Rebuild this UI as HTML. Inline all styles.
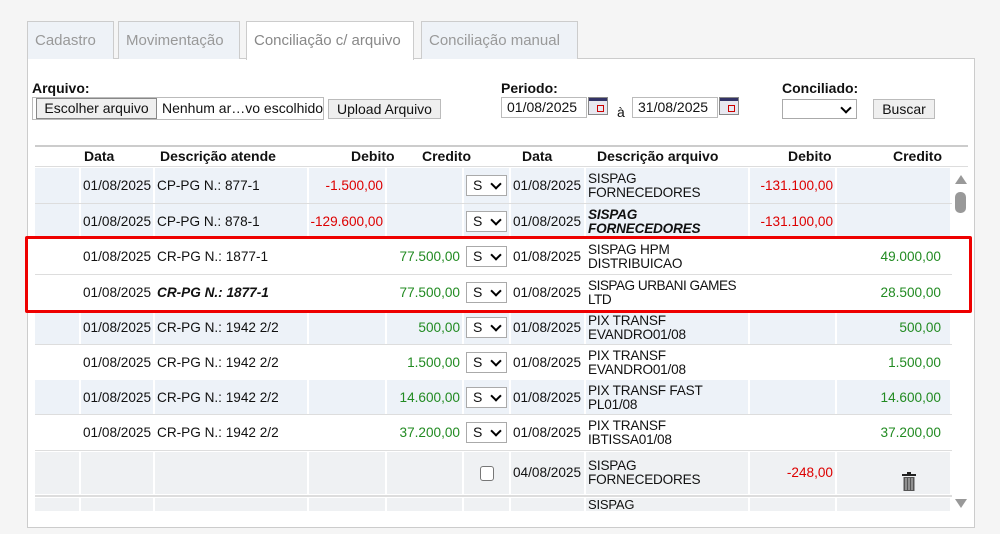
<!DOCTYPE html><html><head><meta charset="utf-8"><style>
*{box-sizing:border-box}body{margin:0;width:1000px;height:534px;background:#f5f5f5;font-family:"Liberation Sans",Arial,sans-serif;font-size:14px;color:#111;position:relative;overflow:hidden}
.a{position:absolute}
.tab{position:absolute;top:21px;height:38px;background:#eef2f7;border:1px solid #ccc;border-bottom:none;color:#999;font-size:15px;line-height:38px;padding-left:7px}
.panel{position:absolute;left:27px;top:58px;width:948px;height:470px;background:#fff;border:1px solid #ccc}
.btn{position:absolute;background:#efefef;border:1px solid #bbb;font-size:14px;text-align:center}
.inp{position:absolute;border:1px solid #bbb;background:#fff;font-size:14px;padding-left:5px;line-height:19px}
.row{position:absolute;left:35px;height:35px;display:flex;font-size:13.6px}
.row div{height:100%;margin-right:2px;display:flex;align-items:center;padding:0 2px;line-height:14px}
.b div{background:#edf2f8}.w div{background:#fff}.g div{background:#eff1f3}
.r{justify-content:flex-end;color:#d00}.gr{justify-content:flex-end;color:#228b22}
.c0{width:44px}.c1{width:72px}.c2{width:152px}.c3{width:76px}.c4{width:75px}.c5{width:45px}.c6{width:73px}.c7{width:162px;letter-spacing:-0.2px}.c8{width:85px}.c9{width:113px;padding-right:9px!important}
.sel{width:42px;height:21px;border:1px solid #aaa;background:#fff;font-size:14px;padding-left:6px;line-height:19px;position:relative}
.sel:after{content:"";position:absolute;right:6px;top:4px;width:6px;height:6px;border-right:2px solid #000;border-bottom:2px solid #000;transform:rotate(45deg)}
.hd{position:absolute;top:148px;font-weight:bold;font-size:14px}
.line{position:absolute;left:35px;width:933px;height:1px;background:#ddd}
.cal{position:absolute;width:20px;height:18px;border:1px solid #888;background:#e8e8f0}
.cal:before{content:"";position:absolute;left:0;top:0;right:0;height:3px;background:#336}
.cal:after{content:"";position:absolute;right:3px;top:7px;width:5px;height:5px;border:1px solid #c00}
</style></head><body>
<div class="panel"></div>
<div class="tab" style="left:27px;width:87px">Cadastro</div>
<div class="tab" style="left:118px;width:122px">Movimentação</div>
<div class="tab" style="left:246px;width:168px;background:#fff;height:39px;color:#888">Conciliação c/ arquivo</div>
<div class="tab" style="left:421px;width:157px">Conciliação manual</div>
<div class="a" style="left:32px;top:80px;font-weight:bold">Arquivo:</div>
<div class="inp" style="left:32px;top:97px;width:292px;height:23px"></div>
<div class="btn" style="left:36px;top:98px;width:121px;height:21px;line-height:19px;background:#efefef;border-color:#888">Escolher arquivo</div>
<div class="a" style="left:162px;top:100px">Nenhum ar…vo escolhido</div>
<div class="btn" style="left:328px;top:99px;width:113px;height:20px;line-height:18px">Upload Arquivo</div>
<div class="a" style="left:501px;top:80px;font-weight:bold">Periodo:</div>
<div class="inp" style="left:501px;top:97px;width:86px;height:21px">01/08/2025</div>
<div class="cal" style="left:588px;top:97px"></div>
<div class="a" style="left:617px;top:104px">à</div>
<div class="inp" style="left:632px;top:97px;width:86px;height:21px">31/08/2025</div>
<div class="cal" style="left:719px;top:97px"></div>
<div class="a" style="left:782px;top:80px;font-weight:bold">Conciliado:</div>
<div class="inp sel" style="left:782px;top:99px;width:75px;height:20px"></div>
<div class="btn" style="left:873px;top:99px;width:62px;height:20px;line-height:18px">Buscar</div>
<div class="line" style="top:145px;height:2px;background:#ccc"></div>
<div class="hd" style="left:84px">Data</div><div class="hd" style="left:160px">Descrição atende</div>
<div class="hd" style="left:351px">Debito</div><div class="hd" style="left:422px">Credito</div>
<div class="hd" style="left:522px">Data</div><div class="hd" style="left:597px">Descrição arquivo</div>
<div class="hd" style="left:788px">Debito</div><div class="hd" style="left:893px">Credito</div>
<div class="line" style="top:166px"></div>

<div class="row b" style="top:168px"><div class="c0"></div><div class="c1">01/08/2025</div><div class="c2">CP-PG N.: 877-1</div><div class="c3 r">-1.500,00</div><div class="c4"></div><div class="c5"><span class="sel">S</span></div><div class="c6">01/08/2025</div><div class="c7">SISPAG<br>FORNECEDORES</div><div class="c8 r">-131.100,00</div><div class="c9"></div></div>
<div class="line" style="top:203px"></div>
<div class="row b" style="top:204px"><div class="c0"></div><div class="c1">01/08/2025</div><div class="c2">CP-PG N.: 878-1</div><div class="c3 r">-129.600,00</div><div class="c4"></div><div class="c5"><span class="sel">S</span></div><div class="c6">01/08/2025</div><div class="c7" style="font-weight:bold;font-style:italic">SISPAG<br>FORNECEDORES</div><div class="c8 r">-131.100,00</div><div class="c9"></div></div>
<div class="row w" style="top:239px"><div class="c0"></div><div class="c1">01/08/2025</div><div class="c2">CR-PG N.: 1877-1</div><div class="c3"></div><div class="c4 gr">77.500,00</div><div class="c5"><span class="sel">S</span></div><div class="c6">01/08/2025</div><div class="c7">SISPAG HPM<br>DISTRIBUICAO</div><div class="c8"></div><div class="c9 gr">49.000,00</div></div>
<div class="line" style="top:274px"></div>
<div class="row w" style="top:275px"><div class="c0"></div><div class="c1">01/08/2025</div><div class="c2" style="font-weight:bold;font-style:italic">CR-PG N.: 1877-1</div><div class="c3"></div><div class="c4 gr">77.500,00</div><div class="c5"><span class="sel">S</span></div><div class="c6">01/08/2025</div><div class="c7" style="letter-spacing:-0.5px">SISPAG URBANI GAMES<br>LTD</div><div class="c8"></div><div class="c9 gr">28.500,00</div></div>
<div class="row b" style="top:310px"><div class="c0"></div><div class="c1">01/08/2025</div><div class="c2">CR-PG N.: 1942 2/2</div><div class="c3"></div><div class="c4 gr">500,00</div><div class="c5"><span class="sel">S</span></div><div class="c6">01/08/2025</div><div class="c7">PIX TRANSF<br>EVANDRO01/08</div><div class="c8"></div><div class="c9 gr">500,00</div></div>
<div class="line" style="top:344px"></div>
<div class="row w" style="top:345px"><div class="c0"></div><div class="c1">01/08/2025</div><div class="c2">CR-PG N.: 1942 2/2</div><div class="c3"></div><div class="c4 gr">1.500,00</div><div class="c5"><span class="sel">S</span></div><div class="c6">01/08/2025</div><div class="c7">PIX TRANSF<br>EVANDRO01/08</div><div class="c8"></div><div class="c9 gr">1.500,00</div></div>
<div class="row b" style="top:380px"><div class="c0"></div><div class="c1">01/08/2025</div><div class="c2">CR-PG N.: 1942 2/2</div><div class="c3"></div><div class="c4 gr">14.600,00</div><div class="c5"><span class="sel">S</span></div><div class="c6">01/08/2025</div><div class="c7">PIX TRANSF FAST<br>PL01/08</div><div class="c8"></div><div class="c9 gr">14.600,00</div></div>
<div class="line" style="top:414px"></div>
<div class="row w" style="top:415px"><div class="c0"></div><div class="c1">01/08/2025</div><div class="c2">CR-PG N.: 1942 2/2</div><div class="c3"></div><div class="c4 gr">37.200,00</div><div class="c5"><span class="sel">S</span></div><div class="c6">01/08/2025</div><div class="c7">PIX TRANSF<br>IBTISSA01/08</div><div class="c8"></div><div class="c9 gr">37.200,00</div></div>
<div class="line" style="top:450px"></div>
<div class="row g" style="top:452px;height:42px"><div class="c0"></div><div class="c1"></div><div class="c2"></div><div class="c3"></div><div class="c4"></div><div class="c5" style="justify-content:center"><span style="width:14px;height:15px;border:1px solid #777;border-radius:3px;background:#fff;display:block"></span></div><div class="c6">04/08/2025</div><div class="c7">SISPAG<br>FORNECEDORES</div><div class="c8 r">-248,00</div><div class="c9" style="justify-content:center;padding-right:2px!important"><svg width="16" height="20" viewBox="0 0 16 20" style="margin-top:18px;margin-left:30px"><rect x="1" y="2" width="14" height="2" fill="#222"/><rect x="6" y="0" width="4" height="2" fill="#222"/><rect x="2.5" y="5" width="11" height="14" fill="#555"/><path d="M5 6v12M8 6v12M11 6v12" stroke="#ccc" stroke-width="1"/></svg></div></div>
<div class="line" style="top:495px;height:2px;background:#ddd"></div>
<div class="row g" style="top:498px;height:13px;overflow:hidden"><div class="c0"></div><div class="c1"></div><div class="c2"></div><div class="c3"></div><div class="c4"></div><div class="c5"></div><div class="c6"></div><div class="c7" style="align-items:flex-start;font-size:13px">SISPAG</div><div class="c8"></div><div class="c9"></div></div>
<div class="a" style="left:952px;top:168px;width:18px;height:343px;background:#fff"></div>
<div class="a" style="left:955px;top:175px;width:0;height:0;border-left:6px solid transparent;border-right:6px solid transparent;border-bottom:9px solid #999"></div>
<div class="a" style="left:955px;top:192px;width:11px;height:21px;border-radius:5px;background:#999"></div>
<div class="a" style="left:955px;top:499px;width:0;height:0;border-left:6px solid transparent;border-right:6px solid transparent;border-top:9px solid #999"></div>
<div class="a" style="left:25px;top:236px;width:947px;height:77px;border:3px solid #e00;border-radius:2px"></div>
</body></html>
